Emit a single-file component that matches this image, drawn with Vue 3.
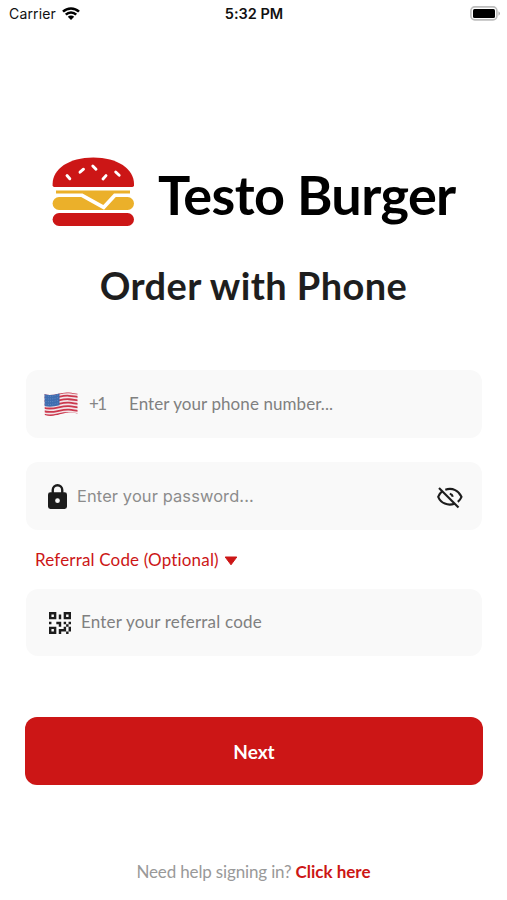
<script setup>
import { ref } from 'vue'

const phone = ref('')
const password = ref('')
const referral = ref('')
const showPassword = ref(false)
const showReferral = ref(true)

// sesame seeds on the top bun
const seeds = [
  'M15 18.500l2.800 3.300',
  'M28 15.200l3.500-3',
  'M40.800 9l3.200 3.300',
  'M51 22l3-3.400',
  'M63.700 15l3.500 3.200'
]
</script>

<template>
  <div class="screen">
    <div class="statusBar">
      <div class="carrier">
        <span>Carrier</span>
        <svg class="wifi" viewBox="0 0 18 13">
          <path d="M1 4.700a11.300 11.300 0 0 1 16 0M3.800 7.700a7.300 7.300 0 0 1 10.400 0" />
          <path class="dot" d="M9 13l-3.200-3.200a4.500 4.500 0 0 1 6.400 0z" />
        </svg>
      </div>
      <div class="time">5:32 PM</div>
      <svg class="battery" viewBox="0 0 31 15">
        <rect x="0.9" y="0.9" width="26" height="13" rx="3.8" fill="#fff" stroke="#bdbdbd" stroke-width="1.6" />
        <rect x="3" y="3" width="22" height="9" rx="1.5" fill="#000" />
        <path d="M28.5 5.2a2.6 2.6 0 0 1 0 4.6z" fill="#a8a8a8" />
      </svg>
    </div>

    <div class="brand">
      <svg class="burger" viewBox="0 0 82 70">
        <path d="M.6 27C.6 12 17 .6 41.3.6S82 12 82 27v1.300q0 1.700-1.700 1.700h-78Q.6 30 .6 28.300z" fill="#cc1616" />
        <path v-for="seed in seeds" :key="seed" class="seed" :d="seed" />
        <rect x="0.600" y="40.100" width="81.400" height="12.800" rx="6.400" fill="#ebb02a" />
        <path d="M20 36.400h10.500L51.300 48 62 36.400h10" fill="none" stroke="#fff" stroke-width="7.400" />
        <path d="M4 33.500h74v2.900H62L51.300 48 30.500 36.400H4z" fill="#ebb02a" />
        <rect x="0.600" y="56" width="81.400" height="13" rx="6.500" fill="#cc1616" />
      </svg>
      <div class="brandName">Testo Burger</div>
    </div>

    <div class="title">Order with Phone</div>

    <div class="form">
      <label class="field phoneField">
        <svg class="flag" viewBox="0 0 34 25">
          <defs>
            <clipPath id="wave">
              <path d="M.5 2.200C9 5 17-.5 25 .6c3.500.4 6 .9 8.500 1.200v19.800c-3-.9-6-1.200-9-1C17 21 10 26 .8 23z" />
            </clipPath>
          </defs>
          <g clip-path="url(#wave)">
            <rect width="34" height="25" fill="#f3e4e8" />
            <path
              v-for="n in 7"
              :key="n"
              class="stripe"
              :d="`M0 ${n * 3.45 - 1.5}c9 3 17-2.500 25-1.600 4 .4 6 .9 9 1.200`"
            />
            <path d="M0 0h15.500v13.200C10 14.500 6 15.300 0 14z" fill="#3f6db0" />
            <path
              v-for="n in 4"
              :key="'s' + n"
              class="stars"
              :d="`M1.500 ${n * 2.7 + 1.2}c5 1 9 0 13-1.200`"
            />
          </g>
        </svg>
        <span class="code">+1</span>
        <input v-model="phone" type="tel" placeholder="Enter your phone number...">
      </label>

      <label class="field passwordField">
        <svg class="lock" viewBox="4 1 16 21">
          <path d="M12 17a2 2 0 1 0 0-4 2 2 0 0 0 0 4M18 8a2 2 0 0 1 2 2v10a2 2 0 0 1-2 2H6a2 2 0 0 1-2-2V10a2 2 0 0 1 2-2h1V6a5 5 0 0 1 10 0v2h1M12 3a3 3 0 0 0-3 3v2h6V6a3 3 0 0 0-3-3z" fill="#1c1c1c" fill-rule="evenodd" />
        </svg>
        <input v-model="password" :type="showPassword ? 'text' : 'password'" placeholder="Enter your password...">
        <svg class="eye" viewBox="0 0 26 22" @click.prevent="showPassword = !showPassword">
          <path d="M8.300 2.700C15.500.3 22 3.800 24.500 9.800c-.8 2-2 3.700-3.700 5" />
          <path d="M5.400 4.100C3.500 5.500 2.100 7.500 1.200 9.800c2.700 6.500 9.600 9.300 16.300 6.900" />
          <path d="M2 .9l19.500 19.600" />
          <path d="M12.800 6.800a4 4 0 0 1 3 3" />
        </svg>
      </label>

      <div class="referralToggle" @click="showReferral = !showReferral">
        <span>Referral Code (Optional)</span>
        <svg class="caret" viewBox="0 0 14 10">
          <path d="M1.200 1h11.600L7 8.800z" />
        </svg>
      </div>

      <label v-if="showReferral" class="field referralField">
        <svg class="qr" viewBox="3 3 18 18">
          <path d="M3 11h2v2H3v-2m8-6h2v4h-2V5m-2 6h4v4h-2v-2H9v-2m6 0h2v2h2v-2h2v2h-2v2h2v4h-2v2h-2v-2h-4v2h-2v-4h4v-2h2v-2h-2v-2m4 8v-4h-2v4h2M15 3h6v6h-6V3m2 2v2h2V5h-2M3 3h6v6H3V3m2 2v2h2V5H5M3 15h6v6H3v-6m2 2v2h2v-2H5z" fill="#1c1c1c" />
        </svg>
        <input v-model="referral" placeholder="Enter your referral code">
      </label>

      <button class="nextButton">Next</button>
    </div>

    <div class="help">
      <span class="question">Need help signing in?</span>
      <a class="link">Click here</a>
    </div>
  </div>
</template>

<style>
body {
  background-color: #fff;
}
</style>

<style scoped>
.screen {
  box-sizing: border-box;
  width: 507px;
  height: 900px;
  overflow: hidden;
  font-family: Lato, "Liberation Sans", sans-serif;
  font-variant-ligatures: none;
  background-color: #fff;
}
.statusBar {
  display: grid;
  grid-template-columns: 1fr auto 1fr;
  align-items: center;
  height: 27px;
  padding: 0 6px 0 9px;
  font-family: Inter, sans-serif;
  font-size: 14px;
  color: #111;
}
.carrier {
  display: flex;
  align-items: center;
  gap: 6px;
  letter-spacing: 0.15px;
}
.wifi {
  width: 18px;
  height: 13px;
  fill: none;
  stroke: #000;
  stroke-width: 2.5;
}
.wifi .dot {
  fill: #000;
  stroke: none;
}
.time {
  margin-right: 2px;
  font-size: 14.5px;
  font-weight: 600;
}
.battery {
  justify-self: end;
  width: 31px;
  height: 15px;
}
.brand {
  display: flex;
  align-items: center;
  height: 70px;
  margin: 130px 0 0 52px;
}
.burger {
  width: 82px;
  height: 70px;
}
.seed {
  fill: none;
  stroke: #fff;
  stroke-width: 2.9;
  stroke-linecap: round;
}
.brandName {
  margin-left: 24px;
  padding-top: 5px;
  font-size: 54px;
  font-weight: bold;
  line-height: 70px;
  letter-spacing: -0.6px;
  white-space: nowrap;
  color: #000;
}
.title {
  margin-top: 33px;
  height: 50px;
  font-size: 38px;
  font-weight: bold;
  line-height: 50px;
  letter-spacing: 0.4px;
  text-align: center;
  white-space: nowrap;
  color: #1e1e1e;
}
.form {
  display: flex;
  flex-direction: column;
  margin: 60px 25px 0 26px;
}
.field {
  display: flex;
  align-items: center;
  box-sizing: border-box;
  height: 68px;
  border-radius: 12px;
  background-color: #f9f9f9;
}
.field input {
  flex: 1;
  min-width: 0;
  padding: 0 0 2px;
  font-family: inherit;
  font-size: 17px;
  letter-spacing: 0.08px;
  color: #1e1e1e;
  border: none;
  outline: none;
  background: none;
}
.field input::placeholder {
  color: #808080;
  opacity: 1;
}
.phoneField {
  padding: 0 18px;
}
.phoneField input {
  margin-left: 24px;
}
.flag {
  width: 34px;
  height: 25px;
}
.stripe {
  fill: none;
  stroke: #cb384d;
  stroke-width: 1.8;
}
.stars {
  fill: none;
  stroke: #7d9fcf;
  stroke-width: 0.7;
  stroke-dasharray: 0.8 1.5;
}
.code {
  width: 16px;
  margin-left: 11px;
  padding-bottom: 2px;
  font-size: 17px;
  letter-spacing: -1.5px;
  color: #858585;
}
.passwordField {
  margin-top: 24px;
  padding: 0 19px 0 22px;
}
.passwordField input {
  margin-left: 10px;
  padding-bottom: 0;
  font-family: Inter, sans-serif;
  font-size: 16.4px;
  letter-spacing: 0.13px;
}
.passwordField input::placeholder {
  color: #8c8c8c;
}
.lock {
  width: 19px;
  height: 25px;
}
.eye {
  width: 26px;
  height: 22px;
  margin-top: 3px;
  fill: none;
  stroke: #1c1c1c;
  stroke-width: 2.1;
}
.referralToggle {
  display: flex;
  align-items: center;
  gap: 5px;
  height: 59px;
  padding-left: 9px;
  font-size: 17px;
  letter-spacing: 0.17px;
  color: #cc1616;
}
.caret {
  width: 14px;
  height: 10px;
  margin-top: 2px;
  fill: #cc1616;
  stroke: #cc1616;
  stroke-linejoin: round;
}
.referralField {
  height: 67px;
  padding: 0 23px;
}
.referralField input {
  margin-left: 10px;
  letter-spacing: 0.2px;
}
.qr {
  width: 22px;
  height: 22px;
}
.nextButton {
  height: 68px;
  margin: 61px -1px 0;
  padding: 0;
  font-family: inherit;
  font-size: 19px;
  font-weight: bold;
  color: #fff;
  border: none;
  border-radius: 12px;
  background-color: #cc1616;
}
.help {
  display: flex;
  justify-content: center;
  gap: 4px;
  margin-top: 76px;
  font-size: 17px;
  line-height: 22px;
}
.question {
  letter-spacing: -0.15px;
  color: #999;
}
.link {
  font-weight: bold;
  color: #cc1616;
}
</style>
